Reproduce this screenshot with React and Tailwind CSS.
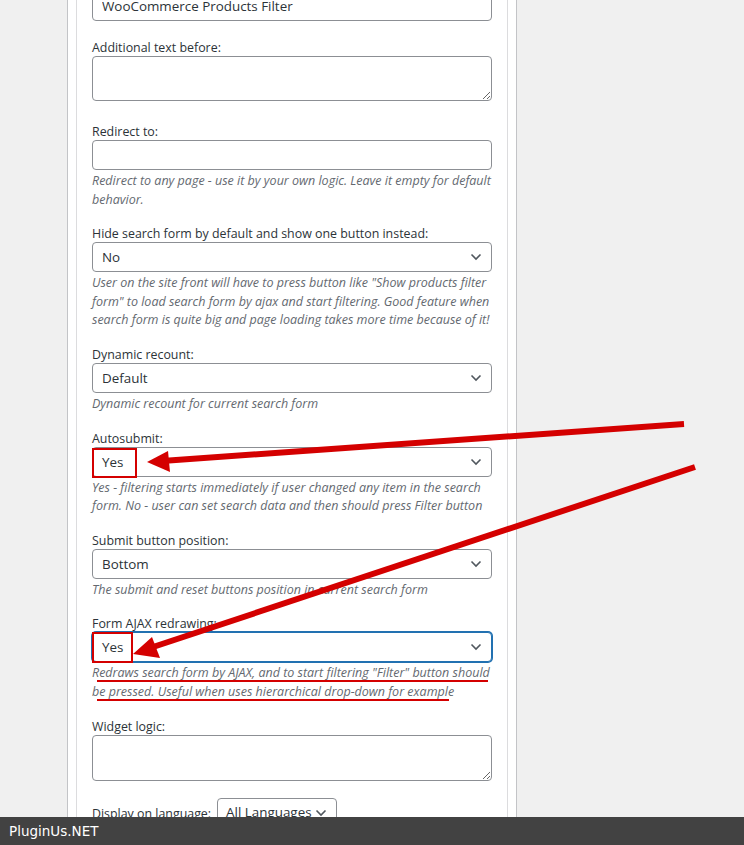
import React from "react";

const font = { fontFamily: '"Open Sans", "Noto Sans", sans-serif' };

function Chevron() {
  return (
    <svg width="12" height="8" viewBox="0 0 12 8" className="shrink-0">
      <path d="M1.5 1.5 L6 6 L10.5 1.5" fill="none" stroke="#50575e" strokeWidth="1.6" />
    </svg>
  );
}

function Label({ children }) {
  return <div className="pt-[2px] text-[12.4px] leading-[16px] text-[#2c3338]">{children}</div>;
}

function Select({ value, focused }) {
  return (
    <div
      className={
        "h-[30px] w-[400px] rounded-[4px] bg-white flex items-center justify-between pl-[9px] pr-[9px] text-[13.4px] text-[#2c3338] " +
        (focused ? "border border-[#2271b1] shadow-[0_0_0_1px_#2271b1]" : "border border-[#8c8f94]")
      }
    >
      <span>{value}</span>
      <Chevron />
    </div>
  );
}

function Desc({ lines }) {
  return (
    <div className="mt-[2px] text-[12.5px] italic leading-[18.6px] text-[#646970]">
      {lines.map((l) => (
        <div key={l} className="whitespace-nowrap">
          {l}
        </div>
      ))}
    </div>
  );
}

function SelectField({ label, value, lines, focused }) {
  return (
    <div className="mb-[15px]">
      <Label>{label}</Label>
      <Select value={value} focused={focused} />
      <Desc lines={lines} />
    </div>
  );
}

export default function App() {
  return (
    <div className="relative h-[845px] w-[744px] overflow-hidden bg-[#f0f0f0] flex flex-col" style={font}>
      <div className="flex-1 overflow-hidden">
        <div className="ml-[67px] w-[450px] border-x border-[#c3c4c7] bg-white px-[8px]">
          <div className="border-x border-[#dcdcde] px-[15px] pb-[40px]">
            <div className="mt-[-9px]">
              <input
                readOnly
                value="WooCommerce Products Filter"
                className="h-[30px] w-[400px] rounded-[4px] border border-[#8c8f94] bg-white px-[9px] text-[13.4px] text-[#2c3338] outline-none"
              />
            </div>

            <div className="mt-[17px]">
              <Label>Additional text before:</Label>
              <textarea
                readOnly
                className="block h-[45px] w-[400px] rounded-[4px] border border-[#8c8f94] bg-white outline-none"
              />
            </div>

            <div className="mt-[21px] mb-[15px]">
              <Label>Redirect to:</Label>
              <input
                readOnly
                className="block h-[30px] w-[400px] rounded-[4px] border border-[#8c8f94] bg-white outline-none"
              />
              <Desc
                lines={[
                  "Redirect to any page - use it by your own logic. Leave it empty for default",
                  "behavior.",
                ]}
              />
            </div>

            <SelectField
              label="Hide search form by default and show one button instead:"
              value="No"
              lines={[
                'User on the site front will have to press button like "Show products filter',
                'form" to load search form by ajax and start filtering. Good feature when',
                "search form is quite big and page loading takes more time because of it!",
              ]}
            />
            <SelectField
              label="Dynamic recount:"
              value="Default"
              lines={["Dynamic recount for current search form"]}
            />
            <SelectField
              label="Autosubmit:"
              value="Yes"
              lines={[
                "Yes - filtering starts immediately if user changed any item in the search",
                "form. No - user can set search data and then should press Filter button",
              ]}
            />
            <SelectField
              label="Submit button position:"
              value="Bottom"
              lines={["The submit and reset buttons position in current search form"]}
            />
            <SelectField
              label="Form AJAX redrawing:"
              value="Yes"
              focused
              lines={[
                'Redraws search form by AJAX, and to start filtering "Filter" button should',
                "be pressed. Useful when uses hierarchical drop-down for example",
              ]}
            />

            <div>
              <Label>Widget logic:</Label>
              <textarea
                readOnly
                className="block h-[46px] w-[400px] rounded-[4px] border border-[#8c8f94] bg-white outline-none"
              />
            </div>

            <div className="mt-[17px] flex items-center gap-[6px]">
              <span className="text-[12.4px] text-[#2c3338] pt-[4px]">Display on language:</span>
              <div className="h-[30px] w-[120px] rounded-[4px] border border-[#8c8f94] bg-white flex items-center justify-between pl-[8px] pr-[9px] text-[13.4px] text-[#2c3338]">
                <span>All Languages</span>
                <Chevron />
              </div>
            </div>
          </div>
        </div>
      </div>

      <footer className="h-[28px] shrink-0 bg-[#424242] flex items-center px-[9px]">
        <span className="text-[13.5px] text-white" style={{ fontFamily: '"DejaVu Sans", sans-serif' }}>
          PluginUs.NET
        </span>
      </footer>

      <svg className="pointer-events-none absolute inset-0" width="744" height="845" viewBox="0 0 744 845">
        <rect x="93" y="449" width="43" height="28" fill="none" stroke="#d40000" strokeWidth="2" />
        <rect x="93" y="633" width="39" height="29" fill="none" stroke="#d40000" strokeWidth="2" />
        <line x1="684" y1="424" x2="162" y2="461" stroke="#d40000" strokeWidth="6" />
        <polygon points="147,462 168,451 170,472" fill="#d40000" />
        <line x1="695" y1="467" x2="150" y2="648" stroke="#d40000" strokeWidth="6" />
        <polygon points="133,654 152,637 160,658" fill="#d40000" />
        <line x1="97" y1="681" x2="488" y2="681" stroke="#d40000" strokeWidth="2" />
        <line x1="97" y1="700" x2="449" y2="700" stroke="#d40000" strokeWidth="2" />
      </svg>
    </div>
  );
}
